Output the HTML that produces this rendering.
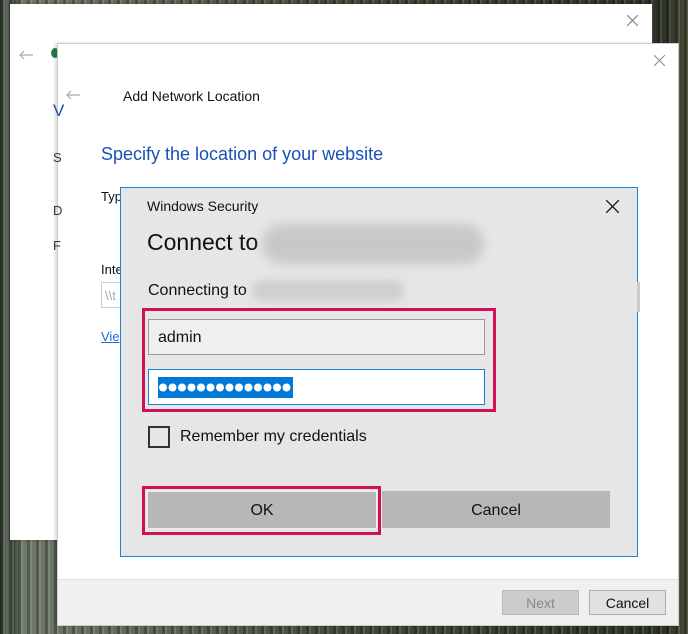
<!DOCTYPE html>
<html><head><style>
*{margin:0;padding:0;box-sizing:border-box}
body{width:688px;height:634px;overflow:hidden;position:relative;font-family:"Liberation Sans",sans-serif;
background:linear-gradient(90deg,#2c3528 0%,#5d6a5c 1%,#3a4536 2%,#6f7a6a 3%,#404a3b 50%,#2e3327 97%,#4c4a36 100%);}
.a{position:absolute}
.t{position:absolute;white-space:nowrap}
</style></head><body>
<div class="a" style="left:0;top:0;width:688px;height:634px;background:repeating-linear-gradient(90deg,rgba(0,0,0,.25) 0 3px,rgba(255,255,255,.12) 3px 5px,rgba(0,0,0,0) 5px 9px)"></div>
<!-- window1 -->
<div class="a" style="left:10px;top:4px;width:642px;height:536px;background:#fff;box-shadow:0 0 3px rgba(0,0,0,.3)"></div>
<svg class="a" style="left:627px;top:15px" width="11" height="11"><path d="M0 0L11 11M11 0L0 11" stroke="#777" stroke-width="1"/></svg>
<svg class="a" style="left:19px;top:50px" width="14" height="10"><path d="M1 5H14M5 1L1 5L5 9" stroke="#aaa" fill="none" stroke-width="1.2"/></svg>
<div class="a" style="left:51px;top:48px;width:8px;height:10px;border-radius:50%;background:#2a7a4a"></div>
<!-- window2 -->
<div class="a" style="left:57px;top:43px;width:622px;height:583px;background:#fff;border:1px solid #ccc;box-shadow:-2px 0 3px rgba(0,0,0,.15)"></div>
<div class="a" style="left:58px;top:579px;width:620px;height:46px;background:#f0f0f0;border-top:1px solid #e0e0e0"></div>
<svg class="a" style="left:654px;top:55px" width="11" height="11"><path d="M0 0L11 11M11 0L0 11" stroke="#888" stroke-width="1"/></svg>
<svg class="a" style="left:66px;top:90px" width="14" height="10"><path d="M1 5H14M5 1L1 5L5 9" stroke="#aaa" fill="none" stroke-width="1.2"/></svg>
<div class="t" style="left:123px;top:88px;font-size:14px;color:#111">Add Network Location</div>
<div class="t" style="left:101px;top:144px;font-size:18px;color:#1a4fb8">Specify the location of your website</div>
<div class="t" style="left:101px;top:189px;font-size:13px;color:#111">Typ</div>
<div class="t" style="left:101px;top:262px;font-size:13px;color:#111">Inte</div>
<div class="a" style="left:101px;top:282px;width:30px;height:26px;border:1px solid #ccc"></div>
<div class="t" style="left:105px;top:288px;font-size:13px;color:#aaa">\\t</div>
<div class="t" style="left:101px;top:329px;font-size:13px;color:#1a6fd0;text-decoration:underline">Vie</div>
<div class="t" style="left:53px;top:101px;font-size:17px;color:#1a4fb8">V</div>
<div class="t" style="left:53px;top:150px;font-size:13px;color:#333">S</div>
<div class="t" style="left:53px;top:203px;font-size:13px;color:#333">D</div>
<div class="t" style="left:53px;top:238px;font-size:13px;color:#333">F</div>
<div class="a" style="left:502px;top:590px;width:77px;height:25px;background:#ccc;border:1px solid #bbb"></div>
<div class="t" style="left:502px;top:595px;width:77px;text-align:center;font-size:14px;color:#888">Next</div>
<div class="a" style="left:589px;top:590px;width:77px;height:25px;background:#e1e1e1;border:1px solid #adadad"></div>
<div class="t" style="left:589px;top:595px;width:77px;text-align:center;font-size:14px;color:#111">Cancel</div>
<!-- dialog -->
<div class="a" style="left:120px;top:187px;width:518px;height:370px;background:#e6e6e6;border:1px solid #1883d7"></div>
<div class="a" style="left:637px;top:282px;width:3px;height:30px;background:#ccc"></div>
<div class="t" style="left:147px;top:198px;font-size:14px;color:#111">Windows Security</div>
<svg class="a" style="left:606px;top:200px" width="13" height="13"><path d="M0 0L13 13M13 0L0 13" stroke="#111" stroke-width="1.3"/></svg>
<div class="t" style="left:147px;top:229px;font-size:23px;color:#111">Connect to</div>
<div class="a" style="left:262px;top:224px;width:222px;height:40px;border-radius:20px;background:#c8c8c8;filter:blur(5px)"></div>
<div class="t" style="left:148px;top:282px;font-size:16px;color:#111">Connecting to</div>
<div class="a" style="left:252px;top:280px;width:152px;height:22px;border-radius:11px;background:#cfcfcf;filter:blur(4px)"></div>
<div class="a" style="left:142px;top:308px;width:354px;height:104px;border:3px solid #d0105a"></div>
<div class="a" style="left:148px;top:319px;width:337px;height:36px;background:#efefef;border:1px solid #999"></div>
<div class="t" style="left:158px;top:329px;font-size:16px;color:#111">admin</div>
<div class="a" style="left:148px;top:369px;width:337px;height:36px;background:#fff;border:1px solid #1883d7"></div>
<div class="a" style="left:158px;top:377px;width:135px;height:21px;background:#0078d7"></div>
<svg class="a" style="left:158px;top:377px" width="135" height="21">
<g fill="#fff">
<circle cx="5" cy="10.5" r="4"/><circle cx="14.5" cy="10.5" r="4"/><circle cx="24" cy="10.5" r="4"/><circle cx="33.5" cy="10.5" r="4"/><circle cx="43" cy="10.5" r="4"/><circle cx="52.5" cy="10.5" r="4"/><circle cx="62" cy="10.5" r="4"/><circle cx="71.5" cy="10.5" r="4"/><circle cx="81" cy="10.5" r="4"/><circle cx="90.5" cy="10.5" r="4"/><circle cx="100" cy="10.5" r="4"/><circle cx="109.5" cy="10.5" r="4"/><circle cx="119" cy="10.5" r="4"/><circle cx="128.5" cy="10.5" r="4"/>
</g></svg>
<div class="a" style="left:148px;top:426px;width:22px;height:22px;border:2px solid #333"></div>
<div class="t" style="left:180px;top:428px;font-size:16px;color:#111">Remember my credentials</div>
<div class="a" style="left:142px;top:486px;width:239px;height:49px;border:3px solid #d0105a"></div>
<div class="a" style="left:147px;top:491px;width:230px;height:38px;background:#b7b7b7;border:1px solid #eee"></div>
<div class="t" style="left:147px;top:502px;width:230px;text-align:center;font-size:16px;color:#111">OK</div>
<div class="a" style="left:382px;top:491px;width:228px;height:37px;background:#b7b7b7"></div>
<div class="t" style="left:382px;top:502px;width:228px;text-align:center;font-size:16px;color:#111">Cancel</div>
</body></html>
